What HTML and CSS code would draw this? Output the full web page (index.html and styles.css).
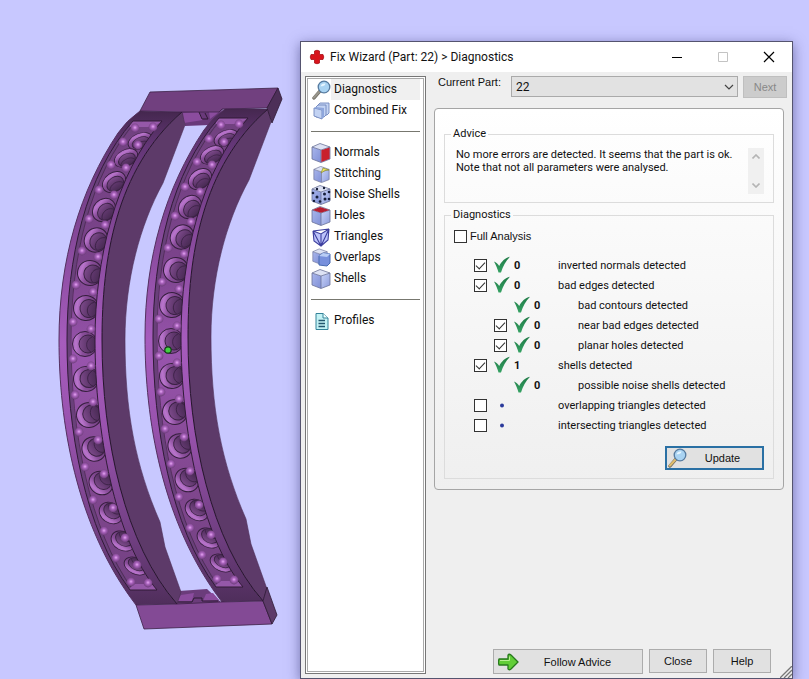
FILE: index.html
```html
<!DOCTYPE html>
<html lang="en">
<head>
<meta charset="utf-8">
<title>Fix Wizard (Part: 22) &gt; Diagnostics</title>
<link rel="stylesheet" href="styles.css">
</head>
<body>
<svg width="0" height="0" class="defs" aria-hidden="true">
  <defs>
    <linearGradient id="cubeL" x1="0" y1="0" x2="1" y2="1"><stop offset="0" stop-color="#a9b6ec"/><stop offset="1" stop-color="#7f8fd6"/></linearGradient>
    <linearGradient id="cubeR" x1="0" y1="0" x2="1" y2="1"><stop offset="0" stop-color="#c9d4f8"/><stop offset="1" stop-color="#8c9bdc"/></linearGradient>
    <linearGradient id="tickFill" x1="0" y1="0" x2="0" y2="1"><stop offset="0" stop-color="#1f7a47"/><stop offset="1" stop-color="#35a263"/></linearGradient>
    <symbol id="cube" viewBox="0 0 20 20">
      <path d="M1 4 10 7V19.500L1 16Z" fill="url(#cubeL)"/><path d="M10 7 19 4V16L10 19.500Z" fill="url(#cubeR)"/><path d="M1 4 9 .5 19 4 10 7Z" fill="#dde2f4"/>
      <path d="M1 4 9 .5 19 4V16L10 19.500 1 16ZM1 4 10 7 19 4M10 7V19" fill="none" stroke="#6b7298" stroke-width=".8" stroke-linejoin="round"/>
    </symbol>
    <symbol id="tick" viewBox="0 0 18 18"><path d="M1 5.500C3 6 5 8 6.200 10C8.500 5.500 12 2 17 .8C12.500 5.500 10 10 8 16.500H5.500C4.500 13 3 9 1 5.500Z" fill="url(#tickFill)"/></symbol>
    <symbol id="glass" viewBox="0 0 20 20"><path d="M9 11 3 18" stroke="#6e6a60" stroke-width="3.400" stroke-linecap="round"/><path d="M8.500 11.500 3 17.600" stroke="var(--handle)" stroke-width="2.200" stroke-linecap="round"/><circle cx="13" cy="7" r="5.800" fill="#a9d3f2" stroke="#557a9f" stroke-width="1.300"/><path d="M9.500 6.500C10 4 12 3 14.500 3.500C14 6 12 6 9.500 6.500Z" fill="#e6f5ff"/></symbol>
  </defs>
</svg>
<main class="workspace">
  <svg class="scene" viewBox="0 0 300 679" role="img" aria-label="Part 22">
    <defs>
      <linearGradient id="face" gradientUnits="userSpaceOnUse" x1="0" y1="111" x2="0" y2="605"><stop offset="0" stop-color="#44274e"/><stop offset=".07" stop-color="#633676"/><stop offset=".25" stop-color="#854899"/><stop offset=".47" stop-color="#a65cbd"/><stop offset=".65" stop-color="#9852ad"/><stop offset=".87" stop-color="#6f3e80"/><stop offset="1" stop-color="#4f2e5b"/></linearGradient>
      <linearGradient id="floor" gradientUnits="userSpaceOnUse" x1="0" y1="111" x2="0" y2="605"><stop offset="0" stop-color="#70417f"/><stop offset=".3" stop-color="#7b438b"/><stop offset=".5" stop-color="#9854ad"/><stop offset=".75" stop-color="#81478f"/><stop offset="1" stop-color="#704080"/></linearGradient>
      <linearGradient id="ring" x1="0" y1="0" x2="1" y2="0"><stop offset="0" stop-color="#a765bb"/><stop offset=".14" stop-color="#b874cb"/><stop offset=".4" stop-color="#8a4e9b"/><stop offset="1" stop-color="#63376f"/></linearGradient>
      <linearGradient id="bore" x1="0" y1="0" x2="1" y2="0"><stop offset="0" stop-color="#7d4a8b"/><stop offset=".5" stop-color="#5e366b"/><stop offset="1" stop-color="#472a52"/></linearGradient>
      <radialGradient id="ball" cx=".5" cy=".45" r=".55"><stop offset="0" stop-color="#e5a5f3"/><stop offset=".4" stop-color="#a962bc"/><stop offset="1" stop-color="#6b3b79"/></radialGradient>
      <clipPath id="trough"><path d="M133 121C85 175 67 260 67 340C67 430 85 530 130 590H157C115 540 95 430 95 340C95 260 115 175 162 121Z"/></clipPath>
      <g id="hole"><circle r="12.500" fill="url(#ring)" stroke="#351e3d" stroke-width="1"/><circle cx="3" r="9" fill="url(#bore)" stroke="#3b2244" stroke-width="1"/><path d="M7 -7C0 -4 0 5 6 8" fill="none" stroke="#3d2347" stroke-width=".9"/></g>
      <circle id="b" r="4.400" fill="url(#ball)"/>
      <g id="strap">
        <path d="M182 112 185 125 163 183C140 225 125 280 125 340C125 410 135 465 160 522L165 547 181 592 177 604C125 545 102 440 102 340C102 260 115 170 182 112Z" fill="#5d3a69" stroke="#4b2d56" stroke-width=".6"/>
        <path d="M140 111Q126 121 118 133C80 190 59 260 59 340C59 420 75 525 136 605L177 604C125 545 102 440 102 340C102 260 115 170 182 112Z" fill="url(#face)"/>
        <path d="M140 111Q126 121 118 133C80 190 59 260 59 340C59 420 75 525 136 605" fill="none" stroke="#54305f"/>
        <path d="M182 112C115 170 102 260 102 340C102 440 125 545 177 604" fill="none" stroke="#27152d" stroke-width="1"/>
        <g clip-path="url(#trough)">
          <path d="M60 115H170V595H60Z" fill="url(#floor)"/>
          <path d="M133 121C85 175 67 260 67 340C67 430 85 530 130 590" fill="none" stroke="#69407a" stroke-width="7"/>
          <path d="M136 121C89 175 71 260 71 340C71 430 89 530 133 590" fill="none" stroke="#48294f" stroke-width=".8"/>
          <path d="M130 121H162L154 127H130Z" fill="#9558a8"/><path d="M128 590 134 584H153L158 590Z" fill="#9558a8"/>
          <use href="#hole" transform="translate(140 141) rotate(67) scale(.6 1)"/><use href="#hole" transform="translate(126 158) rotate(62) scale(.65 1)"/>
          <use href="#hole" transform="translate(114 182) rotate(55) scale(.75 1)"/><use href="#hole" transform="translate(104 210) rotate(43) scale(.85 1)"/>
          <use href="#hole" transform="translate(96 240) rotate(33) scale(.92 1)"/><use href="#hole" transform="translate(90 273) rotate(20)"/>
          <use href="#hole" transform="translate(86 308) rotate(10)"/><use href="#hole" transform="translate(85 344)"/>
          <use href="#hole" transform="translate(86 379) rotate(-8)"/><use href="#hole" transform="translate(89 415) rotate(-20)"/>
          <use href="#hole" transform="translate(94 449) rotate(-35) scale(.95 1)"/><use href="#hole" transform="translate(101 483) rotate(-48) scale(.9 1)"/>
          <use href="#hole" transform="translate(111 513) rotate(-56) scale(.8 1)"/><use href="#hole" transform="translate(123 541) rotate(-62) scale(.75 1)"/>
          <use href="#hole" transform="translate(136 566) rotate(-65) scale(.65 1)"/>
        </g>
        <path d="M133 121C85 175 67 260 67 340C67 430 85 530 130 590H157C115 540 95 430 95 340C95 260 115 175 162 121Z" fill="none" stroke="#301b37" stroke-width="1"/>
        <use href="#b" x="135" y="128"/><use href="#b" x="153" y="127"/><use href="#b" x="123" y="142"/><use href="#b" x="138" y="145"/><use href="#b" x="111" y="165"/><use href="#b" x="126" y="168"/><use href="#b" x="99" y="190"/><use href="#b" x="114" y="195"/><use href="#b" x="89" y="219"/><use href="#b" x="105" y="225"/><use href="#b" x="82" y="251"/><use href="#b" x="98" y="257"/><use href="#b" x="76" y="285"/><use href="#b" x="93" y="292"/><use href="#b" x="73" y="322"/><use href="#b" x="91" y="329"/><use href="#b" x="73" y="359"/><use href="#b" x="91" y="366"/><use href="#b" x="75" y="395"/><use href="#b" x="93" y="402"/><use href="#b" x="79" y="432"/><use href="#b" x="98" y="440"/><use href="#b" x="85" y="467"/><use href="#b" x="104" y="474"/><use href="#b" x="93" y="500"/><use href="#b" x="113" y="508"/><use href="#b" x="104" y="531"/><use href="#b" x="125" y="538"/><use href="#b" x="116" y="558"/><use href="#b" x="137" y="565"/><use href="#b" x="131" y="582"/><use href="#b" x="148" y="583"/>
      </g>
    </defs>
    <path d="M180 108H224L210 125 185 126Z" fill="#69397a"/><path d="M183 113 199 112 203 120 184 123Z" fill="#8b4c9e"/><path d="M209 112H219L210 119Z" fill="#8b4c9e"/><path d="M199 112 202 119H208L205 113" fill="none" stroke="#2d1933"/>
    <path d="M179 591 207 589 224 605 175 605Z" fill="#6b3c7b"/><path d="M181 595 194 593 192 601H177ZM206 594 213 593 219 600 203 601Z" fill="#8b4c9e"/><path d="M177 602H192L194 598H202V601H218" fill="none" stroke="#2d1933"/>
    <use href="#strap"/><use href="#strap" transform="translate(86 -3)"/>
    <path d="M150 92 278 88 267 108 222 109 219 112H182L140 111Z" fill="#71407f" stroke="#3c2246" stroke-width=".8"/>
    <path d="M278 88 282 99 272 123 267 108Z" fill="#4d2f58" stroke="#2d1933" stroke-width=".8"/>
    <path d="M136 605 177 604 220 602 263 601 272 624 144 629Z" fill="#834a95" stroke="#3c2246" stroke-width=".8"/>
    <path d="M263 601 267 587 277 615 272 624Z" fill="#5d3a69" stroke="#2d1933" stroke-width=".8"/>
    <circle cx="168" cy="350" r="3.200" fill="#43cf43" stroke="#123b18" stroke-width="1.200"/>
  </svg>
  <section class="dialog" aria-label="Fix Wizard">
    <header class="titlebar">
      <svg class="cross" width="16" height="16" viewBox="0 0 16 16"><path d="M5.500 2Q8 .5 10.500 2V5.500H14Q15.500 8 14 10.500H10.500V14Q8 15.500 5.500 14V10.500H2Q.5 8 2 5.500H5.500Z" fill="#d8141c" stroke="#a90f16" stroke-width=".8"/></svg>
      <h1>Fix Wizard (Part: 22) &gt; Diagnostics</h1>
      <button class="sys" aria-label="Minimize"><svg width="12" height="12" viewBox="0 0 12 12"><path d="M1 6.500H11" stroke="#000"/></svg></button>
      <button class="sys" aria-label="Maximize" disabled><svg width="12" height="12" viewBox="0 0 12 12"><path d="M1.500 1.500H10.500V10.500H1.500Z" fill="none" stroke="#c3c3c3"/></svg></button>
      <button class="sys" aria-label="Close window"><svg width="12" height="12" viewBox="0 0 12 12"><path d="M1 1 11 11M11 1 1 11" stroke="#000" stroke-width="1.200"/></svg></button>
    </header>
    <div class="content">
      <nav class="pages">
        <a class="page current" href="#diagnostics"><svg class="picture"><use href="#glass"/></svg>Diagnostics</a>
        <a class="page" href="#combined"><svg class="picture" viewBox="0 0 20 20"><g fill="#c3d3f3" stroke="#6f86bd" stroke-width=".9"><path d="M7 4 9 2H18V12L16 14H7Z"/><path d="M5 6 7 4H15V14L13 16H5Z"/><path d="M3 7 11 9V18L3 15Z"/></g><path d="M3 7 5 6 13 7 11 9ZM11 9 13 7V16L11 18Z" fill="#8ea6dc"/></svg>Combined Fix</a>
        <hr>
        <a class="page" href="#normals"><svg class="picture" viewBox="0 0 20 20"><use href="#cube"/><path d="M10.400 7.200 18.600 4.500V15.800L10.400 19Z" fill="#c9202c"/></svg>Normals</a>
        <a class="page" href="#stitching"><svg class="picture" viewBox="0 0 20 20"><use href="#cube" x="2" y="2" width="17" height="17"/><path d="M10 9 12 4 18 6 14 6.500Z" fill="#ebe65c" stroke="#8d8a34" stroke-width=".7"/></svg>Stitching</a>
        <a class="page" href="#noise"><svg class="picture" viewBox="0 0 20 20"><use href="#cube"/><g fill="#151d38"><circle cx="2" cy="8" r="1.300"/><circle cx="6" cy="4" r="1.200"/><circle cx="6" cy="12" r="1.500"/><circle cx="9" cy="16.500" r="1.300"/><circle cx="13" cy="3" r="1.200"/><circle cx="13.500" cy="9" r="1.500"/><circle cx="18" cy="7" r="1.300"/><circle cx="14" cy="14" r="1.500"/><circle cx="18" cy="14" r="1.300"/><circle cx="3" cy="16" r="1.200"/></g></svg>Noise Shells</a>
        <a class="page" href="#holes"><svg class="picture" viewBox="0 0 20 20"><use href="#cube"/><path d="M1.500 4 9 1 18.500 4 10 6.700Z" fill="#b51d30"/></svg>Holes</a>
        <a class="page" href="#triangles"><svg class="picture" viewBox="0 0 20 20"><path d="M2 4 10 7 18 2 17 13 10 19 3 14Z" fill="#bcc3fa"/><path d="M2 4 18 2 10 7ZM2 4 3 14 10 19 17 13 18 2M10 7V19M2 4 10 19 18 2" fill="none" stroke="#3d3f9e" stroke-width="1.100"/></svg>Triangles</a>
        <a class="page" href="#overlaps"><svg class="picture" viewBox="0 0 20 20"><use href="#cube" x="1" y="0" width="16" height="17"/><path d="M8 8 12 5 19 6V15L16 18 8 17Z" fill="#7890dc" stroke="#496bb1"/><path d="M8 8 12 5 19 6 16 9Z" fill="#b9cdf5"/></svg>Overlaps</a>
        <a class="page" href="#shells"><svg class="picture"><use href="#cube"/></svg>Shells</a>
        <hr>
        <a class="page" href="#profiles"><svg class="picture" viewBox="0 0 20 20"><path d="M5 2.500H12L17 7V18.500H5Z" fill="#c3f2f5" stroke="#358399"/><path d="M12 2.500V7H17" fill="#eff" stroke="#358399"/><path d="M7.500 9.500H14M7.500 12.500H14M7.500 15.500H14" stroke="#24566e" stroke-width="1.300"/></svg>Profiles</a>
      </nav>
      <form class="detail" onsubmit="return false">
        <div class="part">
          <label for="part">Current Part:</label>
          <div class="combo"><select id="part"><option>22</option></select><svg width="10" height="6" viewBox="0 0 10 6"><path d="M1 1 5 5 9 1" fill="none" stroke="#444" stroke-width="1.200"/></svg></div>
          <button class="next" disabled>Next</button>
        </div>
        <div class="panel">
          <fieldset class="advice">
            <legend>Advice</legend>
            <p>No more errors are detected. It seems that the part is ok.<br>Note that not all parameters were analysed.</p>
            <div class="scroll"><svg width="8" height="5" viewBox="0 0 8 5"><path d="M.5 4.500 4 1 7.500 4.500" fill="none" stroke="#b4b4b4" stroke-width="1.600"/></svg><svg width="8" height="5" viewBox="0 0 8 5"><path d="M.5 .5 4 4 7.500 .5" fill="none" stroke="#b4b4b4" stroke-width="1.600"/></svg></div>
          </fieldset>
          <fieldset class="results">
            <legend>Diagnostics</legend>
            <div class="full"><input type="checkbox" id="full"><label for="full">Full Analysis</label></div>
            <div class="row"><input type="checkbox" id="r1" checked><svg class="tick"><use href="#tick"/></svg><b>0</b><label for="r1">inverted normals detected</label></div>
            <div class="row"><input type="checkbox" id="r2" checked><svg class="tick"><use href="#tick"/></svg><b>0</b><label for="r2">bad edges detected</label></div>
            <div class="row sub"><i></i><svg class="tick"><use href="#tick"/></svg><b>0</b><span>bad contours detected</span></div>
            <div class="row sub"><input type="checkbox" id="r4" checked><svg class="tick"><use href="#tick"/></svg><b>0</b><label for="r4">near bad edges detected</label></div>
            <div class="row sub"><input type="checkbox" id="r5" checked><svg class="tick"><use href="#tick"/></svg><b>0</b><label for="r5">planar holes detected</label></div>
            <div class="row"><input type="checkbox" id="r6" checked><svg class="tick"><use href="#tick"/></svg><b>1</b><label for="r6">shells detected</label></div>
            <div class="row sub"><i></i><svg class="tick"><use href="#tick"/></svg><b>0</b><span>possible noise shells detected</span></div>
            <div class="row"><input type="checkbox" id="r8"><svg class="tick" viewBox="0 0 18 18"><circle cx="9" cy="9.500" r="2" fill="#2b3a9b"/></svg><b></b><label for="r8">overlapping triangles detected</label></div>
            <div class="row"><input type="checkbox" id="r9"><svg class="tick" viewBox="0 0 18 18"><circle cx="9" cy="9.500" r="2" fill="#2b3a9b"/></svg><b></b><label for="r9">intersecting triangles detected</label></div>
            <button class="update"><svg class="picture pale"><use href="#glass"/></svg><span>Update</span></button>
          </fieldset>
        </div>
        <footer class="actions">
          <button class="follow"><svg width="21" height="18" viewBox="0 0 21 18"><path d="M1 6H10V2Q11 .5 13 2L20 9 13 16Q11 17.500 10 16V12H1Q0 9 1 6Z" fill="#62ce38" stroke="#277a1c" stroke-width="1.300" stroke-linejoin="round"/><path d="M2 7.500H11.500V3.500" fill="none" stroke="#b7f092"/></svg><span>Follow Advice</span></button>
          <button>Close</button>
          <button>Help</button>
        </footer>
      </form>
    </div>
    <svg class="grip" width="12" height="12" viewBox="0 0 12 12"><path d="M0 12 12 0M4 12 12 4M8 12 12 8" stroke="#777" stroke-width="1.300"/></svg>
  </section>
</main>
</body>
</html>
```
FILE: styles.css
```css
* { box-sizing: border-box; }
body { margin: 0; background: #c8c8ff; color: #111; font: 11px/13px Roboto, "Open Sans", sans-serif; }
.defs { position: absolute; }
.workspace { display: grid; grid-template-columns: 300px minmax(0, 1fr); min-height: 100vh; padding-right: 16px; }
.scene { display: block; width: 100%; }
.dialog { position: relative; display: flex; flex-direction: column; margin: 41px 0 0; border: 1px solid #55546f; background: #efefef; box-shadow: 0 3px 12px rgba(40, 40, 100, .55); }
.titlebar { display: flex; align-items: center; height: 30px; background: #fff; padding-left: 8px; }
.titlebar h1 { flex: 1; margin: 0 0 0 5px; font-size: 12px; font-weight: 400; line-height: 16px; }
.sys { width: 46px; height: 30px; padding: 0; border: 0; background: none; display: grid; place-items: center; }
.content { flex: 1; display: flex; gap: 8px; padding: 4px 5px 4px 4px; }
.pages { width: 121px; flex: none; border: 1px solid #777; outline: 1px solid #aaa; outline-offset: -3px; background: #fff; padding: 2px 5px; }
.page { display: flex; align-items: center; gap: 3px; height: 21px; color: #111; text-decoration: none; font-size: 12px; white-space: nowrap; }
.page.current { background: linear-gradient(90deg, #fff 20px, #f0f0f0 20px); }
.picture { width: 20px; height: 20px; flex: none; --handle: #98958c; }
.pale { --handle: #e0bd6d; }
.pages hr { height: 1px; margin: 10px 0; border: 0; background: #77776f; }
.detail { flex: 1; min-width: 0; display: flex; flex-direction: column; }
.part { display: flex; margin: 0 0 10px 4px; font-family: "Liberation Sans", sans-serif; font-size: 11px; }
.part label { width: 73px; }
.combo { position: relative; flex: 1; }
.combo select { appearance: none; width: 100%; height: 21px; padding: 0 4px; border: 1px solid #aaa; border-radius: 0; background: #e2e2e2; color: #111; font: 12px Roboto, sans-serif; }
.combo svg { position: absolute; right: 4px; top: 8px; }
button { border: 1px solid #acacac; background: #e1e1e1; color: #111; font: 11px "Liberation Sans", sans-serif; padding: 0; }
.next { width: 44px; height: 22px; margin-left: 5px; background: #ccc; border-color: #bfbfbf; color: #888; }
.panel { margin-right: 3px; border: 1px solid #a5a5a5; border-radius: 4px; background: linear-gradient(#fff, #efefef); padding: 18px 9px 10px; }
fieldset { min-width: 0; margin: 0; border: 1px solid #dcdcdc; padding: 0 9px; }
legend { padding: 0 2px; margin-left: -3px; line-height: 14px; }
.advice { display: flex; justify-content: space-between; height: 76px; padding-left: 11px; }
.advice legend { margin-left: -5px; }
.advice p { margin: 7px 0 0; white-space: nowrap; }
.scroll { flex: none; width: 16px; height: 46px; margin-top: 7px; padding: 6px 4px; background: #f0f0f0; display: flex; flex-direction: column; justify-content: space-between; }
.results { margin-top: 5px; padding-bottom: 8px; display: block; }
input { appearance: none; flex: none; width: 13px; height: 13px; margin: 0; border: 1px solid #333; background: #fff; }
input:checked::after { content: ""; display: block; width: 8px; height: 4px; margin: 2px 0 0 1px; border: solid #333; border-width: 0 0 1px 1px; transform: rotate(-47deg); }
.full { display: flex; align-items: center; gap: 3px; height: 20px; margin: 4px 0 9px; font-family: "Liberation Sans", sans-serif; font-size: 11px; }
.row { display: flex; align-items: center; height: 20px; padding-left: 20px; }
.row.sub { padding-left: 40px; }
.row i { width: 13px; }
.tick { width: 18px; height: 18px; margin: 0 3px 0 6px; flex: none; }
.row b { width: 44px; }
.update { display: flex; align-items: center; width: 99px; height: 24px; margin: 11px 0 0 auto; border: 2px solid #2a70a4; }
.update span { flex: 1; padding-right: 4px; }
.actions { display: flex; gap: 6px; margin-top: auto; padding-left: 59px; }
.actions button { flex: 58px 0 1; height: 24px; }
.actions button.follow { display: flex; align-items: center; flex-basis: 150px; height: 25px; padding-left: 4px; }
.follow span { flex: 1; padding-right: 6px; }
.grip { position: absolute; right: 0; bottom: 0; }
```
